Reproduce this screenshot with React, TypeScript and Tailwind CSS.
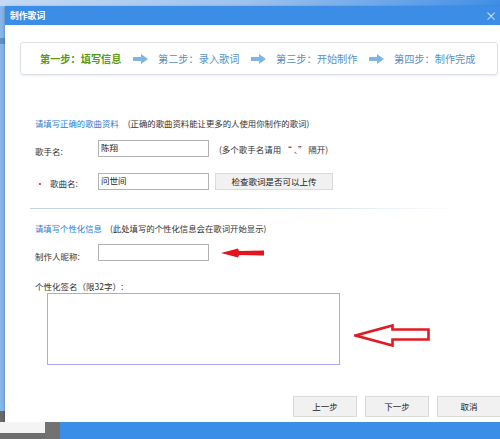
import React from "react"

const font = { fontFamily: '"Noto Sans CJK SC", "Noto Sans", sans-serif' }

function StepArrow() {
  return (
    <svg width="15" height="10" viewBox="0 0 15 10" className="shrink-0">
      <path d="M0 3 L8 3 L8 0 L15 5 L8 10 L8 7 L0 7 Z" fill="#7fb5e2" />
    </svg>
  )
}

function Step({ label, active }: { label: string; active?: boolean }) {
  return (
    <span
      className={
        active
          ? "w-[82px] shrink-0 text-[10.2px] font-bold text-[#5a9a12] whitespace-nowrap"
          : "w-[82px] shrink-0 text-[10.2px] text-[#5891c6] whitespace-nowrap"
      }
    >
      {label}
    </span>
  )
}

function Field({ value }: { value?: string }) {
  return (
    <div className="w-[111px] h-[17px] border border-[#b3b3b3] bg-white px-[2px] text-[8.5px] leading-[12px] text-[#222]">
      {value}
    </div>
  )
}

function GrayButton({ label, className }: { label: string; className?: string }) {
  return (
    <div
      className={
        "flex items-center justify-center border border-[#dadada] bg-[#f1f1f1] text-[8.5px] text-[#222] " +
        (className ?? "")
      }
    >
      {label}
    </div>
  )
}

export default function App() {
  return (
    <div className="w-[500px] h-[439px] overflow-hidden flex flex-col bg-[#3a8ee8]" style={font}>
      {/* desktop strip above */}
      <div className="h-[6px] shrink-0 bg-gradient-to-r from-[#c4daf4] via-[#9cc2ee] to-[#3f8fe6]" />

      <div className="flex h-[416px] shrink-0">
        <div className="w-[5px] shrink-0 flex flex-col bg-[#86b6ea]">
          <div className="h-[32px]" />
          <div className="h-[6px] bg-[#5e92c8]" />
          <div className="flex-1" />
          <div className="h-[11px] bg-[#6a6a6a]" />
        </div>

        {/* dialog */}
        <div className="flex-1 flex flex-col bg-white shadow-[0_1px_3px_rgba(0,0,0,0.35)]">
          <div className="h-[19px] shrink-0 flex items-center justify-between bg-[#3b8de6] pl-[5px] pr-[4px]">
            <span className="text-[8.8px] font-bold text-white">制作歌词</span>
            <span className="text-[12px] leading-none text-[#d8e8fa]">×</span>
          </div>

          <div className="flex-1 flex flex-col">
            {/* steps */}
            <div className="mt-[17px] ml-[15px] mr-[3px] h-[33px] shrink-0 flex items-center gap-[10.5px] pl-[19px] rounded-[3px] border border-[#dde2ea] shadow-[0_1px_2px_rgba(0,0,0,0.08)]">
              <Step label="第一步：填写信息" active />
              <StepArrow />
              <Step label="第二步：录入歌词" />
              <StepArrow />
              <Step label="第三步：开始制作" />
              <StepArrow />
              <Step label="第四步：制作完成" />
            </div>

            {/* section 1 */}
            <div className="mt-[42px] ml-[30px] h-[12px] flex items-center text-[8.4px] leading-[12px] whitespace-nowrap">
              <span className="text-[#2a80d2]">请填写正确的歌曲资料</span>
              <span className="ml-[9px] text-[#333]">(正确的歌曲资料能让更多的人使用你制作的歌词)</span>
            </div>

            <div className="mt-[11px] ml-[30px] h-[17px] flex items-center text-[8.5px] text-[#333]">
              <span className="w-[63px] shrink-0 pt-[6px]">歌手名:</span>
              <Field value="陈翔" />
              <span className="ml-[10px] pt-[2px] whitespace-nowrap">(多个歌手名请用 “ 、” 隔开)</span>
            </div>

            <div className="mt-[16px] ml-[30px] h-[17px] flex items-center text-[8.5px] text-[#333]">
              <span className="w-[15px] shrink-0 pl-[0px] pt-[4px] text-[#e03030] text-[10px] leading-none">•</span>
              <span className="w-[48px] shrink-0 pt-[4px]">歌曲名:</span>
              <Field value="问世间" />
              <GrayButton label="检查歌词是否可以上传" className="ml-[6px] w-[118px] h-[17px]" />
            </div>

            <div className="mt-[18px] ml-[25px] mr-[40px] h-px shrink-0 bg-gradient-to-r from-[#c3d4ea] via-[#c3d4ea] to-transparent" />

            {/* section 2 */}
            <div className="mt-[13px] ml-[30px] h-[12px] flex items-center text-[8.4px] leading-[12px] whitespace-nowrap">
              <span className="text-[#2a80d2]">请填写个性化信息</span>
              <span className="ml-[8px] text-[#333]">(此处填写的个性化信息会在歌词开始显示)</span>
            </div>

            <div className="mt-[10px] ml-[30px] h-[17px] flex items-center text-[8.5px] text-[#333]">
              <span className="w-[63px] shrink-0 pt-[7px]">制作人昵称:</span>
              <Field />
              <svg width="44" height="10" viewBox="0 0 44 10" className="ml-[12px] shrink-0">
                <path d="M0 5 L17 0.5 L18 3 L43 2.5 L43 7.5 L18 7 L17 9.5 Z" fill="#e5141c" />
              </svg>
            </div>

            <div className="mt-[19px] ml-[30px] h-[12px] text-[8.5px] leading-[12px] text-[#333] whitespace-nowrap">
              个性化签名（限32字）:
            </div>

            <div className="mt-[1px] ml-[42px] flex items-start">
              <div className="w-[293px] h-[72px] shrink-0 border-[1.5px] border-[#afa8f0] bg-white" />
              <svg width="77" height="24" viewBox="0 0 77 24" className="ml-[14px] mt-[30px] shrink-0">
                <path
                  d="M1.5 12.5 L38.5 2.5 L38.5 6.5 L74.5 6.5 L74.5 16.5 L38.5 16.5 L38.5 22.5 Z"
                  fill="none"
                  stroke="#e41a22"
                  strokeWidth="2.6"
                  strokeLinejoin="miter"
                />
              </svg>
            </div>

            <div className="mt-[31px] pl-[288px] flex gap-[8px]">
              <GrayButton label="上一步" className="w-[64px] h-[21px] shrink-0" />
              <GrayButton label="下一步" className="w-[64px] h-[21px] shrink-0" />
              <GrayButton label="取消" className="w-[64px] h-[21px] shrink-0" />
            </div>
          </div>
        </div>
      </div>

      {/* taskbar-ish strip below */}
      <div className="flex-1 flex">
        <div className="w-[45px] flex flex-col">
          <div className="h-[11px] bg-[#f4f4f4]" />
          <div className="flex-1 bg-[#6e6e6e]" />
        </div>
        <div className="w-[15px] bg-[#727272]" />
        <div className="flex-1 bg-[#3a8ee8]" />
      </div>
    </div>
  )
}
